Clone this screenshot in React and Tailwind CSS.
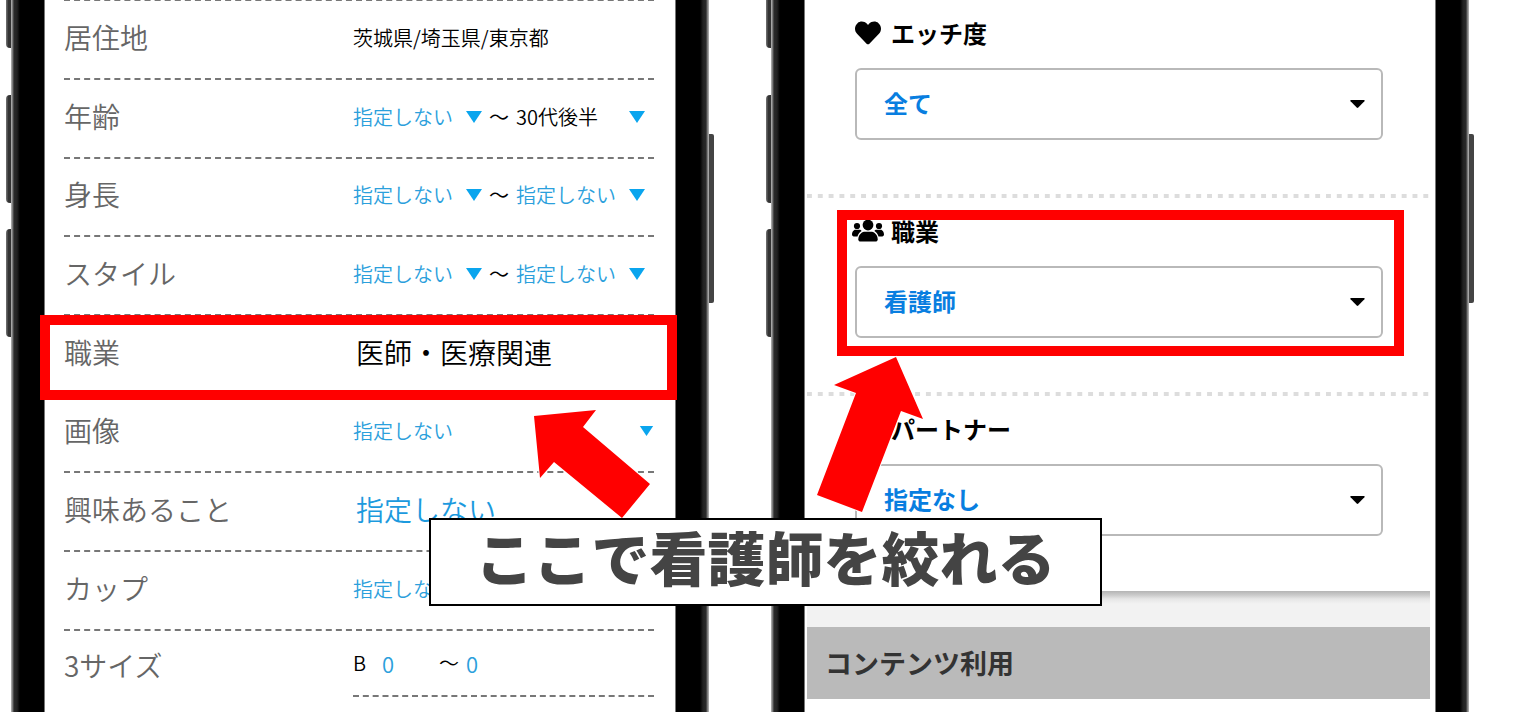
import { FaHeart } from "react-icons/fa";

function UsersIcon() {
  return (
    <svg viewBox="0 0 32 26" className="h-[26px] w-8" aria-hidden="true">
      <circle cx="16" cy="7" r="5.4" />
      <circle cx="5" cy="8" r="3.1" />
      <circle cx="27" cy="8" r="3.1" />
      <path d="M12 13.8H20C22.6 13.8 25.7 17.8 25.7 21.2C25.7 22.7 24.8 23.5 23.4 23.5H8.6C7.2 23.5 6.3 22.7 6.3 21.2C6.3 17.8 9.4 13.8 12 13.8Z" />
      <path d="M3.4 11.8H7.4C8.4 11.8 9.2 12.2 9.6 12.9C7.6 14 6.2 15.9 5.5 18.4H1.8C.7 18.4 0 17.7 0 16.6C0 14.2 1.5 11.8 3.4 11.8Z" />
      <path d="M28.6 11.8H24.6C23.6 11.8 22.8 12.2 22.4 12.9C24.4 14 25.8 15.9 26.5 18.4H30.2C31.3 18.4 32 17.7 32 16.6C32 14.2 30.5 11.8 28.6 11.8Z" />
    </svg>
  );
}

function Triangle({ className }) {
  return (
    <svg viewBox="0 0 16 12" className={"pointer-events-none absolute " + className} aria-hidden="true">
      <path d="M0 0H16L8 12Z" fill="#0aa5ee" />
    </svg>
  );
}

function Pick({ id, label, value, dark, wide }) {
  return (
    <div className={"relative flex items-center " + (wide ? "flex-1" : "w-[129px]")}>
      <select
        id={id}
        aria-label={label}
        defaultValue={value}
        className={"h-8 w-full appearance-none bg-transparent text-[20px] font-[350] outline-none " + (dark ? "text-black" : "text-[#2ba0dc]")}
      >
        <option>{value}</option>
      </select>
      <Triangle className={wide ? "right-0 h-[10px] w-[15px]" : "right-0 h-3 w-4"} />
    </div>
  );
}

function Range({ id, from, to, dark }) {
  return (
    <>
      <Pick id={id} value={from} />
      <span className="w-[34px] text-center text-[20px]">〜</span>
      <Pick label="上限" value={to} dark={dark} />
    </>
  );
}

function Row({ id, label, children }) {
  return (
    <li className="flex h-[79px] border-b-2 border-dashed border-[#777] pb-1 nth-[3n]:h-[78px]">
      <label htmlFor={id} className="flex w-[289px] shrink-0 items-center pb-[2px] text-[28px] font-[350] text-[#666]">
        {label}
      </label>
      <div className="flex flex-1 items-center">{children}</div>
    </li>
  );
}

function SizePick({ id, label, className }) {
  return (
    <select id={id} aria-label={label} className={"appearance-none bg-transparent text-[22px] font-[350] text-[#2ba0dc] outline-none " + className}>
      <option>0</option>
    </select>
  );
}

function Phone({ children }) {
  return (
    <div className="relative flex min-w-0 flex-1">
      <div className="absolute top-0 -left-[5px] h-12 w-[5px] rounded-bl-sm bg-linear-to-r from-[#777] via-[#333] to-[#333]" />
      <div className="absolute top-[95px] -left-[5px] h-[108px] w-[5px] rounded-l-sm bg-linear-to-r from-[#777] via-[#333] to-[#333]" />
      <div className="absolute top-[229px] -left-[5px] h-[108px] w-[5px] rounded-l-sm bg-linear-to-r from-[#777] via-[#333] to-[#333]" />
      <div className="absolute top-[134px] -right-[5px] h-[169px] w-[5px] rounded-r-xs bg-[#444]" />
      <div className="w-[34px] shrink-0 border-r border-[#777] bg-[linear-gradient(90deg,#bbb_0,#666_2px,#2a2a2a_3px,#222_6px,#000_9px)]" />
      <div className="relative min-w-0 flex-1 bg-white">{children}</div>
      <div className="w-[34px] shrink-0 border-l border-[#777] bg-[linear-gradient(270deg,#bbb_0,#666_2px,#2a2a2a_3px,#222_6px,#000_9px)]" />
    </div>
  );
}

function ProfileSearch() {
  return (
    <Phone>
      <ul className="-mt-px mr-[21px] ml-[19px] border-t-2 border-dashed border-[#777]">
        <Row id="area" label="居住地">
          <button id="area" className="text-[20px] font-[350] text-black">茨城県/埼玉県/東京都</button>
        </Row>
        <Row id="age" label="年齢"><Range id="age" from="指定しない" to="30代後半" dark /></Row>
        <Row id="height" label="身長"><Range id="height" from="指定しない" to="指定しない" /></Row>
        <Row id="style" label="スタイル"><Range id="style" from="指定しない" to="指定しない" /></Row>
        <Row id="job" label="職業">
          <button id="job" className="pb-[2px] pl-[3px] text-[28px] font-[350] text-black">医師・医療関連</button>
        </Row>
        <Row id="image" label="画像"><Pick id="image" value="指定しない" wide /></Row>
        <Row id="interest" label="興味あること">
          <button id="interest" className="pb-[2px] pl-[3px] text-[28px] font-[350] text-[#1c9ade]">指定しない</button>
        </Row>
        <Row id="cup" label="カップ"><Pick id="cup" value="指定しない" wide /></Row>
        <li className="flex">
          <label htmlFor="bust" className="w-[289px] shrink-0 pt-[14px] text-[28px] leading-10 font-[350] text-[#666]">3サイズ</label>
          <div className="flex h-[66px] flex-1 items-center border-b-2 border-dashed border-[#777] text-[20px] font-[350]">
            <span className="w-[29px]">B</span>
            <SizePick id="bust" className="w-[57px]" />
            <span className="w-[27px]">〜</span>
            <SizePick label="バスト上限" className="w-[57px]" />
          </div>
        </li>
      </ul>
      <div className="pointer-events-none absolute top-[315px] -right-[2px] -left-[5px] z-10 h-[85px] border-10 border-[#ff0000]" />
    </Phone>
  );
}

function FilterSection({ id, icon, label, value, last }) {
  return (
    <section className={last ? "h-[195px]" : "flex h-[198px] flex-col"}>
      <div className="flex-1 pr-[47px] pl-[43px]">
        <label htmlFor={id} className="flex h-[68px] items-center gap-[5px] pb-[2px] text-[24px] font-bold text-black">
          <span className="flex w-9 justify-center">{icon}</span>
          {label}
        </label>
        <div className="relative ml-[5px] flex items-center">
          <select
            id={id}
            defaultValue={value}
            className="h-[72px] w-full appearance-none rounded-md border-2 border-[#b9b9b9] bg-white pb-[2px] pl-[27px] text-[24px] font-bold text-[#087ee0] outline-none"
          >
            <option>{value}</option>
          </select>
          <svg viewBox="0 0 15 8" className="pointer-events-none absolute right-[18px] h-2 w-[15px]" aria-hidden="true">
            <path d="M.8 0H14.2Q15 .4 14.4 1.2L8.3 7.5Q7.5 8.3 6.7 7.5L.6 1.2Q0 .4 .8 0Z" />
          </svg>
        </div>
      </div>
      {!last && <div className="h-1 bg-[linear-gradient(90deg,#ddd_50%,transparent_50%)] bg-[length:calc((100%+5px)/58)_4px]" />}
    </section>
  );
}

function FilterPanel() {
  return (
    <Phone>
      <div className="mr-[5px] ml-[2px] overflow-hidden">
        <FilterSection id="level" icon={<FaHeart className="size-[26px]" />} label="エッチ度" value="全て" />
        <FilterSection id="occupation" icon={<UsersIcon />} label="職業" value="看護師" />
        <FilterSection id="partner" label="パートナー" value="指定なし" last />
        <div className="h-9 bg-[linear-gradient(180deg,#b4b4b4_0,#cacaca_4px,#e6e6e6_8px,#f2f2f2_13px)]" />
        <h2 className="flex h-[72px] items-center bg-[#bababa] px-[18px] text-[27px] font-bold text-[#333]">コンテンツ利用</h2>
      </div>
      <div className="pointer-events-none absolute top-[210px] right-[31px] left-8 z-10 h-[146px] border-10 border-[#ff0000]" />
    </Phone>
  );
}

export default function App() {
  return (
    <main
      lang="ja"
      className="relative flex min-h-screen gap-[62px] overflow-hidden bg-white pr-[50px] pl-[11px] font-['Noto_Sans_CJK_JP',sans-serif]"
    >
      <ProfileSearch />
      <FilterPanel />
      <svg viewBox="530 406 124 116" className="pointer-events-none absolute top-[406px] left-[530px] z-20 h-[116px] w-[124px]" aria-hidden="true">
        <path d="M534 416L596 410L583 427L650 484L622 518L554 462L540 478Z" fill="#f00" stroke="#fff" strokeWidth="2" paintOrder="stroke" />
      </svg>
      <svg viewBox="812 352 116 164" className="pointer-events-none absolute top-[352px] left-[812px] z-20 h-[164px] w-[116px]" aria-hidden="true">
        <path d="M896 357L923 419L901 411L862 512L817 495L856 393L834 385Z" fill="#f00" stroke="#fff" strokeWidth="2" paintOrder="stroke" />
      </svg>
      <p className="absolute top-[518px] right-[417px] left-[429px] z-30 h-[88px] border-2 border-black bg-white text-center text-[58px] leading-[72px] font-black whitespace-nowrap text-[#444]">
        ここで看護師を絞れる
      </p>
    </main>
  );
}
